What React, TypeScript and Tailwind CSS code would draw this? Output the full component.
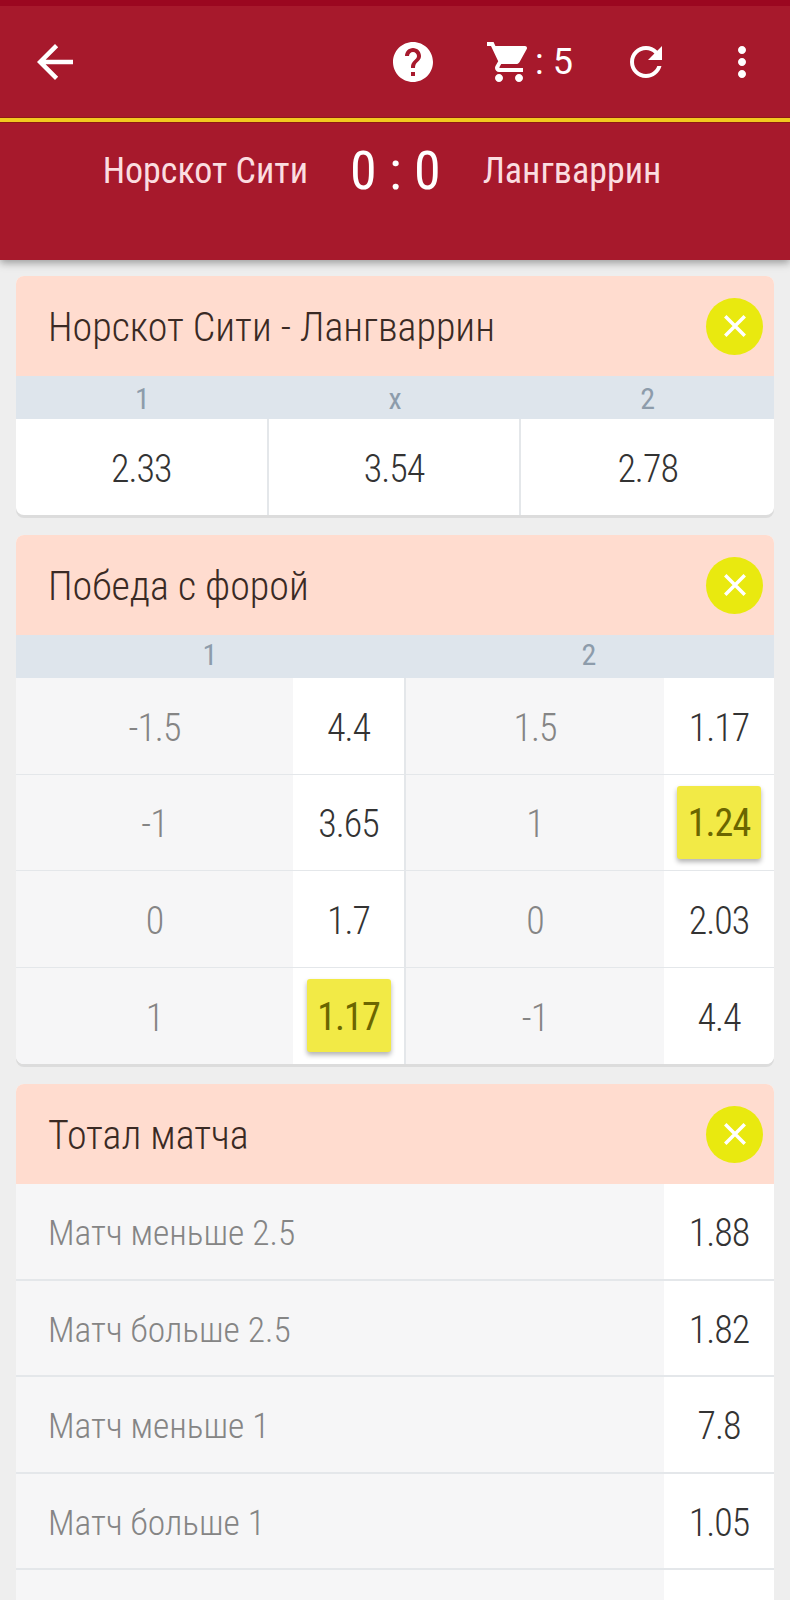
const ICONS = {
  back: 'M20 11H7.83l5.59-5.59L12 4l-8 8 8 8 1.41-1.41L7.83 13H20v-2z',
  help: 'M12 2C6.48 2 2 6.48 2 12s4.48 10 10 10 10-4.48 10-10S17.52 2 12 2zm1 17h-2v-2h2v2zm2.07-7.75l-.9.92C13.45 12.9 13 13.5 13 15h-2v-.5c0-1.1.45-2.1 1.17-2.83l1.24-1.26c.37-.36.59-.86.59-1.41 0-1.1-.9-2-2-2s-2 .9-2 2H8c0-2.21 1.79-4 4-4s4 1.79 4 4c0 .88-.36 1.68-.93 2.25z',
  cart: 'M7 18c-1.1 0-1.99.9-1.99 2S5.9 22 7 22s2-.9 2-2-.9-2-2-2zM1 2v2h2l3.6 7.59-1.35 2.45c-.16.28-.25.61-.25.96 0 1.1.9 2 2 2h12v-2H7.42c-.14 0-.25-.11-.25-.25l.03-.12.9-1.63h7.45c.75 0 1.41-.41 1.75-1.03l3.58-6.49c.08-.14.12-.31.12-.48 0-.55-.45-1-1-1H5.21l-.94-2H1zm16 16c-1.1 0-1.99.9-1.99 2s.89 2 1.99 2 2-.9 2-2-.9-2-2-2z',
  refresh: 'M17.65 6.35C16.2 4.9 14.21 4 12 4c-4.42 0-7.99 3.58-7.99 8s3.57 8 7.99 8c3.73 0 6.84-2.55 7.73-6h-2.08c-.82 2.33-3.04 4-5.65 4-3.31 0-6-2.69-6-6s2.69-6 6-6c1.66 0 3.14.69 4.22 1.78L13 11h7V4l-2.35 2.35z',
  more: 'M12 8c1.1 0 2-.9 2-2s-.9-2-2-2-2 .9-2 2 .9 2 2 2zm0 2c-1.1 0-2 .9-2 2s.9 2 2 2 2-.9 2-2-.9-2-2-2zm0 6c-1.1 0-2 .9-2 2s.9 2 2 2 2-.9 2-2-.9-2-2-2z',
};

function Icon({ d, className }: { d: string; className: string }) {
  return (
    <svg viewBox="0 0 24 24" fill="currentColor" className={className}>
      <path d={d} />
    </svg>
  );
}

function CardHeader({ title }: { title: string }) {
  return (
    <div className="flex h-[100px] items-center justify-between bg-[#ffdccf] pl-[32px] pr-[11px]">
      <span className="pt-[4px] text-[40px] font-light text-[#3a2a24]">{title}</span>
      <button className="flex h-[57px] w-[57px] items-center justify-center rounded-full bg-[#e9e90f] text-white">
        <svg viewBox="0 0 24 24" className="h-[26px] w-[26px]" stroke="currentColor" strokeWidth="3.2" fill="none">
          <path d="M3 3l18 18M21 3L3 21" />
        </svg>
      </button>
    </div>
  );
}

function OddCell({ value, active, className }: { value: string; active?: boolean; className: string }) {
  return (
    <div className={`flex items-center justify-center bg-white ${className}`}>
      {active ? (
        <div className="flex h-[73px] w-[84px] items-center justify-center rounded-[3px] bg-[#f2ea46] pt-[3px] font-normal text-[#6b6600] shadow-[0_3px_5px_rgba(0,0,0,0.3)]">
          {value}
        </div>
      ) : (
        <span className="pt-[5px]">{value}</span>
      )}
    </div>
  );
}

const handicaps = [
  { a: '-1.5', aOdd: '4.4', b: '1.5', bOdd: '1.17' },
  { a: '-1', aOdd: '3.65', b: '1', bOdd: '1.24', bActive: true },
  { a: '0', aOdd: '1.7', b: '0', bOdd: '2.03' },
  { a: '1', aOdd: '1.17', aActive: true, b: '-1', bOdd: '4.4' },
];

const totals = [
  { label: 'Матч меньше 2.5', odd: '1.88' },
  { label: 'Матч больше 2.5', odd: '1.82' },
  { label: 'Матч меньше 1', odd: '7.8' },
  { label: 'Матч больше 1', odd: '1.05' },
  { label: '', odd: '' },
];

export default function App() {
  return (
    <div className="h-[1600px] overflow-hidden bg-[#eeeeee] font-['Roboto',sans-serif] [font-stretch:condensed]">
      <header className="relative bg-[#a7192c] shadow-[0_3px_8px_rgba(0,0,0,0.35)]">
        <div className="h-[6px] bg-[#9b0720]" />
        <div className="flex h-[112px] items-center text-white">
          <Icon d={ICONS.back} className="ml-[28px] h-[54px] w-[54px]" />
          <div className="ml-auto flex items-center">
            <Icon d={ICONS.help} className="h-[48px] w-[48px]" />
            <Icon d={ICONS.cart} className="ml-[48px] h-[48px] w-[48px]" />
            <span className="ml-[2px] w-[41px] text-[36px] [font-stretch:normal]">: 5</span>
            <Icon d={ICONS.refresh} className="ml-[46px] h-[48px] w-[48px]" />
            <Icon d={ICONS.more} className="ml-[48px] mr-[24px] h-[48px] w-[48px]" />
          </div>
        </div>
        <div className="-my-px box-content h-[4px] border-y border-[#8f1a15] bg-[#f2c820]" />
        <div className="flex h-[138px] items-start justify-center pr-[26px] pt-[8px] text-[#fbdde0]">
          <div className="flex items-center">
            <span className="text-[36px]">Норскот Сити</span>
            <span className="mx-[42px] text-[54px] font-normal text-white">0 : 0</span>
            <span className="text-[36px]">Лангваррин</span>
          </div>
        </div>
      </header>

      <main className="flex flex-col gap-[20px] px-[16px] pt-[16px]">
        <section className="overflow-hidden rounded-[8px] bg-white shadow-[0_3px_0_#dcdcdc]">
          <CardHeader title="Норскот Сити - Лангваррин" />
          <div className="grid h-[43px] grid-cols-3 items-center bg-[#dee5ec] pb-[5px] text-center text-[30px] text-[#8d9cab]">
            <span>1</span>
            <span>x</span>
            <span>2</span>
          </div>
          <div className="grid h-[96px] grid-cols-3 text-[38px] font-light tracking-[-1px] text-[#333]">
            <div className="flex items-center justify-center border-r-2 border-[#e4e7ea] pt-[4px]">2.33</div>
            <div className="flex items-center justify-center border-r-2 border-[#e4e7ea] pt-[4px]">3.54</div>
            <div className="flex items-center justify-center pt-[4px]">2.78</div>
          </div>
        </section>

        <section className="overflow-hidden rounded-[8px] bg-white shadow-[0_3px_0_#dcdcdc]">
          <CardHeader title="Победа с форой" />
          <div className="flex h-[43px] items-center bg-[#dee5ec] pb-[5px] text-center text-[30px] text-[#8d9cab]">
            <span className="w-[388px]">1</span>
            <span className="flex-1">2</span>
          </div>
          {handicaps.map((row) => (
            <div key={row.a} className="flex h-[96.5px] border-b border-[#e4e7ea] text-[38px] font-light tracking-[-1px] text-[#333] last:border-b-0">
              <div className="flex w-[277px] items-center justify-center bg-[#f6f6f7] pt-[5px] text-[#858585]">{row.a}</div>
              <OddCell value={row.aOdd} active={row.aActive} className="w-[113px] border-r-2 border-[#e4e7ea]" />
              <div className="flex flex-1 items-center justify-center bg-[#f6f6f7] pt-[5px] text-[#858585]">{row.b}</div>
              <OddCell value={row.bOdd} active={row.bActive} className="w-[110px]" />
            </div>
          ))}
        </section>

        <section className="overflow-hidden rounded-t-[8px] bg-white">
          <CardHeader title="Тотал матча" />
          {totals.map((row, i) => (
            <div key={i} className="flex h-[96.5px] border-b-2 border-[#e4e7ea] text-[38px] font-light tracking-[-1px] text-[#333]">
              <div className="flex flex-1 items-center bg-[#f6f6f7] pl-[32px] pt-[5px] text-[35.5px] tracking-normal text-[#858585]">{row.label}</div>
              <OddCell value={row.odd} className="w-[110px]" />
            </div>
          ))}
        </section>
      </main>
    </div>
  );
}
